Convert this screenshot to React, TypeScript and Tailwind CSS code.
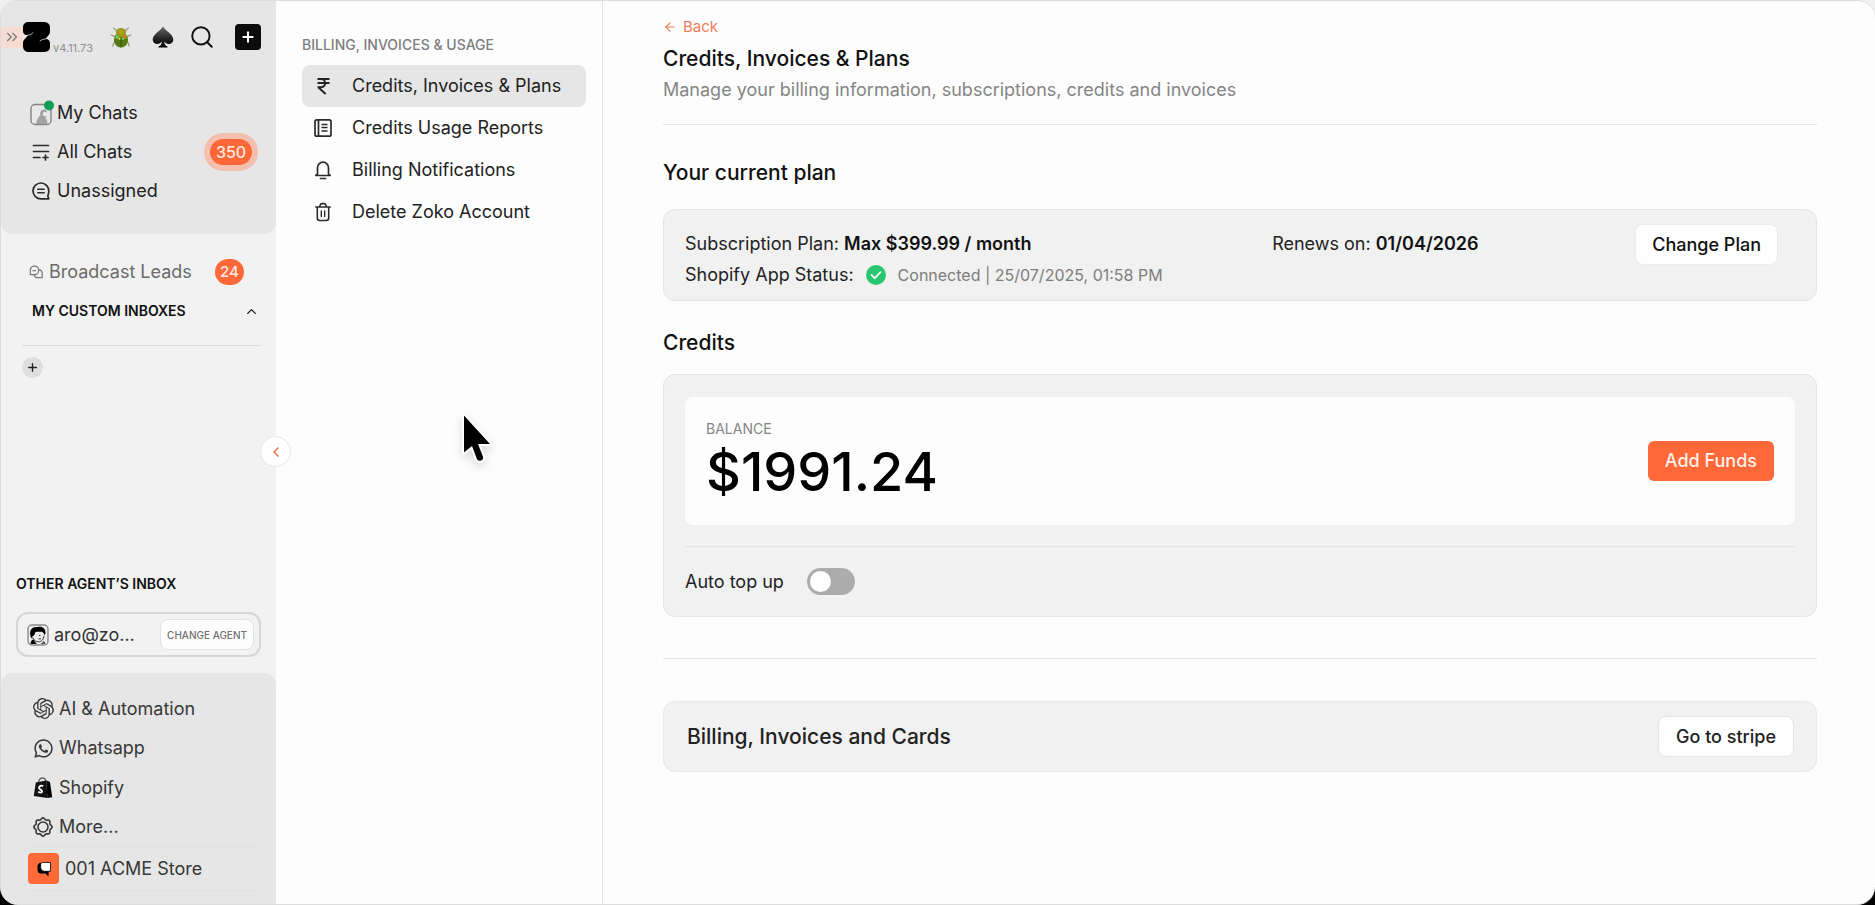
import type { ReactNode } from "react";
import { ArrowLeft, ChevronLeft, ChevronUp, ChevronsRight, Plus, Search } from "lucide-react";
import { SiOpenai } from "react-icons/si";
import { FaWhatsapp } from "react-icons/fa";

function ZokoLogo() {
  return (
    <svg viewBox="0 0 27 30" className="h-[30px] w-[27px]" aria-hidden="true">
      <path
        d="M5 0h16.500a5.500 5.500 0 0 1 5.500 5.500v4c0 2-.9 3.300-2.400 4.800L22.500 17h.3c2.600 0 4.200 1.700 4.200 4.200V25a5 5 0 0 1-5 5H5.500A5.500 5.500 0 0 1 0 24.500V21c0-2 .9-3.200 2.300-4.500L5 13.300C2 13.300 0 12 0 9.200V5a5 5 0 0 1 5-5z"
        fill="#000"
      />
      <path d="M4.500 13.300c2.200 0 4-.9 5.500-2.600M22.500 17c-2.200 0-4 .6-5.500 2" stroke="#d8d8d8" strokeWidth="0.800" strokeLinecap="round" fill="none" />
    </svg>
  );
}

function BeetleIcon() {
  return (
    <svg viewBox="0 0 22 22" className="h-[22px] w-[22px]" aria-hidden="true">
      <path
        d="M8 6.500C5 5.500 6.500 2.500 3 2M14 6.500c3-1 1.500-4 5-4.500M6 11c-2.500 0-2.500-2-5.500-2M16 11c2.500 0 2.500-2 5.500-2M6 14c-2.500.5-2 4.500-3.500 6.500M16 14c2.500.5 2 4.500 3.500 6.500"
        fill="none"
        stroke="#8d9276"
        strokeWidth="1.200"
      />
      <ellipse cx="11" cy="14" rx="7" ry="7.500" fill="#557a12" />
      <path d="M4.300 11.500a7 7.500 0 0 1 13.400 0c-3 3-10.400 3-13.400 0z" fill="#7f9a12" />
      <ellipse cx="11" cy="6.500" rx="5" ry="4.500" fill="#9a9b16" />
      <path d="M11 11v10.500" stroke="#37550b" strokeWidth="1" />
      <circle cx="11" cy="5.800" r="1.800" fill="#d09a14" />
      <circle cx="7" cy="11" r="1.200" fill="#4fe0d0" />
      <circle cx="15" cy="11" r="1.200" fill="#f06a3c" />
      <circle cx="9.500" cy="12.800" r="1" fill="#d8e84a" />
      <circle cx="13" cy="12.800" r="1" fill="#58dfa0" />
    </svg>
  );
}

function SpadeIcon() {
  return (
    <svg viewBox="0 0 22 22" className="h-[22px] w-[22px]" aria-hidden="true">
      <defs>
        <linearGradient id="spade" x1="0" y1="0" x2="0" y2="1">
          <stop offset="0" stopColor="#6a6a6a" />
          <stop offset="0.600" stopColor="#222" />
          <stop offset="1" stopColor="#000" />
        </linearGradient>
      </defs>
      <path
        d="M11 .5c2 4 10.300 7.500 10.300 13 0 2.800-2 4.500-4.500 4.500-2 0-3.600-1-4.600-2.500.2 2.500 1 4.300 3.300 5v1h-9v-1c2.300-.7 3.100-2.500 3.300-5-1 1.500-2.600 2.500-4.600 2.500C2.700 18 .7 16.300.7 13.500.7 8 9 4.500 11 .5z"
        fill="url(#spade)"
      />
    </svg>
  );
}

function ProfileIcon() {
  return (
    <svg viewBox="0 0 26 26" className="h-[26px] w-[26px]" aria-hidden="true">
      <rect x="3" y="4.500" width="20" height="20" rx="4" fill="#e9e9e9" stroke="#858585" strokeWidth="1.400" />
      <path d="M8 24c.8-4.500 2-7 4.500-8.500-1-3 .5-6 3.500-6 2.500 0 3.500 2 3 5-.3 1.800-1.200 2.500-1.500 3.500 1.500 1.500 2 3.500 2 6z" fill="#a3a3a3" />
      <circle cx="17" cy="14" r="2.200" fill="#ededed" />
      <circle cx="21" cy="5.500" r="5" fill="#0f9f55" />
    </svg>
  );
}

function AllChatsIcon() {
  return (
    <svg viewBox="0 0 18 18" className="h-[18px] w-[18px]" fill="none" stroke="#2b2b2b" strokeWidth="1.700" strokeLinecap="round" aria-hidden="true">
      <path d="M1.500 2.500h15M1.500 8.500h15M1.500 14.500h6.500M13.500 12v5M11 14.500h5" />
    </svg>
  );
}

function UnassignedIcon() {
  return (
    <svg viewBox="0 0 18 18" className="h-[18px] w-[18px]" fill="none" stroke="#2b2b2b" strokeWidth="1.700" strokeLinecap="round" strokeLinejoin="round" aria-hidden="true">
      <path d="M9 16.800A7.900 7.900 0 1 1 16.800 9c0 2.500-.5 3.800-1 5l1 2.800z" />
      <path d="M5.800 7.300h6.400M5.800 10.700h6.400" strokeWidth="1.500" />
    </svg>
  );
}

function BroadcastIcon() {
  return (
    <svg viewBox="0 0 16 16" className="h-[14px] w-[14px]" fill="none" stroke="#777" strokeWidth="1.400" strokeLinejoin="round" aria-hidden="true">
      <path d="M1.500 11V6A4.800 4.800 0 0 1 11 5v1.500A4.500 4.500 0 0 1 6.500 11z" />
      <path d="M11 5.500h.5A3.500 3.500 0 0 1 15 9v5.500H9.500A3.500 3.500 0 0 1 6 11M4 6.500h4" />
    </svg>
  );
}

function AgentIcon() {
  return (
    <svg viewBox="0 0 22 22" className="h-[22px] w-[22px] shrink-0" aria-hidden="true">
      <rect x="1" y="1" width="20" height="20" rx="4" fill="#ececec" stroke="#8b8b8b" strokeWidth="1.400" />
      <path d="M3.500 12C2 6 5 2.500 10.500 3c5-1 8 1.500 8 6l-1 2.500c-.5-2-1-3-2.500-3.800C11.500 8 9.500 7 8 8.500c0 2-1 3.500-2.500 3.500v2.500c-1 0-1.700-1-2-2.500z" fill="#000" />
      <path d="M6 14c1 2.500 3 3.800 5.500 3.800 3 0 5-2.500 5.500-6M12 11.500h1.500M11.500 14.800h2.500" fill="none" stroke="#222" strokeWidth="0.900" />
      <path d="M3.500 20c0-2.500 1-4 3-4.500 1 2 2 3 3.500 4.500z" fill="#000" />
      <path d="M13 20c1.500-.5 2.800-1.500 3.300-3 1.500.5 2 1.500 2 3z" fill="#555" />
    </svg>
  );
}

function ShopifyIcon() {
  return (
    <svg viewBox="0 0 20 22" className="h-[22px] w-[20px]" aria-hidden="true">
      <path d="M5.500 5.500C6 2.500 8 .8 10 1c1.800.2 2.800 1.800 3 4" fill="none" stroke="#666" strokeWidth="1.300" />
      <path d="M2.800 5.600 13.500 3.400l.8 17.600L.8 19z" fill="#111" />
      <path d="M13.500 3.400 17 5l2.200 15.200-4.900.9z" fill="#000" />
      <path d="M10.300 9c-2.200-1-4.300 0-4.200 1.800.1 1.900 3 1.800 2.900 3.600-.1 1.500-2 1.600-3.800.4" fill="none" stroke="#fff" strokeWidth="1.900" />
    </svg>
  );
}

function GearIcon() {
  const steps = 96;
  const points = Array.from({ length: steps }, (_, i) => {
    const angle = (i / steps) * Math.PI * 2;
    const radius = 8.3 + 0.8 * Math.cos(angle * 8);
    return `${(10 + radius * Math.cos(angle)).toFixed(2)},${(10 + radius * Math.sin(angle)).toFixed(2)}`;
  }).join(" ");
  return (
    <svg viewBox="0 0 20 20" className="h-[20px] w-[20px]" fill="none" stroke="#3a3a3a" strokeWidth="1.600" strokeLinejoin="round" aria-hidden="true">
      <polygon points={points} />
      <circle cx="10" cy="10" r="5" />
    </svg>
  );
}

function StoreIcon() {
  return (
    <span className="flex size-[31px] items-center justify-center rounded bg-[#ff6a38]">
      <svg viewBox="0 0 16 16" className="size-[16px]" aria-hidden="true">
        <path d="M4 1.500 2 3.500C1.300 4.500 1.500 6 1.500 8c0 3 .8 4.500 3.500 4.500h4.500l3 3v-4l2-2z" fill="#000" />
        <path d="M6.500 1.500h8v8.800h-6a3.800 3.800 0 0 1-3.800-3.800v-3a2 2 0 0 1 1.800-2z" fill="#fff" stroke="#000" strokeWidth="0.800" />
      </svg>
    </span>
  );
}

function RupeeIcon() {
  return (
    <svg viewBox="0 0 20 20" className="size-[20px]" fill="none" stroke="#222" strokeWidth="1.900" aria-hidden="true">
      <path d="M4.500 3h12M4.500 7h12M4.500 3H8c5.500 0 5.500 8.200 0 8.200H5.500v.3l7.200 6.500" />
    </svg>
  );
}

function ReportIcon() {
  return (
    <svg viewBox="0 0 20 20" className="size-[20px]" fill="none" stroke="#2b2b2b" strokeWidth="1.700" strokeLinejoin="round" aria-hidden="true">
      <rect x="2" y="1.800" width="16" height="16.400" rx="1.800" />
      <path d="M5.500 2v16" />
      <path d="M8.500 6.500h6M8.500 9.500h6M8.500 13h6" strokeWidth="1.500" />
    </svg>
  );
}

function BellIcon() {
  return (
    <svg viewBox="0 0 20 20" className="size-[20px]" fill="none" stroke="#2b2b2b" strokeWidth="1.700" strokeLinecap="round" strokeLinejoin="round" aria-hidden="true">
      <path d="M4.500 14V7.700a5.500 5.500 0 0 1 11 0V14l1.700 1.500H2.800zM7.500 18.500h5" />
    </svg>
  );
}

function TrashIcon() {
  return (
    <svg viewBox="0 0 20 20" className="size-[20px]" fill="none" stroke="#2b2b2b" strokeWidth="1.600" strokeLinecap="round" strokeLinejoin="round" aria-hidden="true">
      <path d="M2.800 5h14.400M4.300 5v11a2.500 2.500 0 0 0 2.500 2.500h6.400a2.500 2.500 0 0 0 2.500-2.500V5M6.500 5l.8-2.300A1.500 1.500 0 0 1 8.700 1.600h2.600a1.500 1.500 0 0 1 1.400 1.100l.8 2.300" />
      <path d="M8.300 9v5.500M11.700 9v5.500" strokeWidth="1.400" />
    </svg>
  );
}

function CursorArrow() {
  return (
    <svg viewBox="0 0 40 58" className="pointer-events-none absolute top-[408px] left-[456px] z-20 h-[58px] w-[40px] drop-shadow-lg" aria-hidden="true">
      <path
        d="M7 6.500v37l8-6.500 5 13.200a3.300 3.300 0 0 0 6-2.500L21 35h12z"
        fill="#000"
        stroke="#fff"
        strokeWidth="4"
        strokeLinejoin="round"
        paintOrder="stroke"
      />
    </svg>
  );
}

function NavRow({ icon, label, badge }: { icon: ReactNode; label: string; badge?: ReactNode }) {
  return (
    <a href="#" className="flex h-[39px] items-center gap-[3px]">
      <span className="flex w-[26px] justify-center">{icon}</span>
      <span className="flex-1">{label}</span>
      {badge}
    </a>
  );
}

function Sidebar() {
  return (
    <aside className="relative flex w-[275px] shrink-0 flex-col bg-[#f2f2f2] text-[18px] leading-6">
      <div className="flex h-[233px] flex-col rounded-b-xl bg-[#e6e6e6]">
        <header className="mt-[21px] flex h-[30px] items-center">
          <button aria-label="Expand" className="flex h-[21px] w-[22px] items-center justify-center bg-[#f6dbd2] text-[#777]">
            <ChevronsRight size={18} strokeWidth={1.5} />
          </button>
          <ZokoLogo />
          <span className="ml-[3px] self-end text-[11px] leading-[8px] text-[#8f8f8f]">v4.11.73</span>
          <button aria-label="Debug" className="ml-[17px]"><BeetleIcon /></button>
          <button aria-label="Spaces" className="ml-5"><SpadeIcon /></button>
          <button aria-label="Search" className="ml-[15px] text-[#111]"><Search size={26} strokeWidth={1.8} /></button>
          <button aria-label="New chat" className="ml-5 flex size-[26px] items-center justify-center rounded bg-[#0c0c0c] text-white">
            <Plus size={16} strokeWidth={3} />
          </button>
        </header>
        <nav aria-label="Chats" className="mt-[41px] pr-6 pl-[27px] text-[#222]">
          <NavRow icon={<ProfileIcon />} label="My Chats" />
          <NavRow
            icon={<AllChatsIcon />}
            label="All Chats"
            badge={<span className="flex h-[26px] w-[42px] items-center justify-center rounded-full bg-[#ff6838] text-[16px] font-medium text-[#ffe9e0] ring-6 ring-[#f3bfae]">350</span>}
          />
          <NavRow icon={<UnassignedIcon />} label="Unassigned" />
        </nav>
      </div>

      <a href="#" className="mt-[18px] flex h-[39px] items-center pr-8 pl-[28px] text-[#6b6b6b]">
        <BroadcastIcon />
        <span className="ml-[6px] flex-1">Broadcast Leads</span>
        <span className="flex h-[26px] w-[29px] items-center justify-center rounded-full bg-[#ff6838] text-[15px] font-medium text-[#ffe9e0]">24</span>
      </a>
      <button className="flex h-[40px] items-center justify-between pr-[17px] pl-[31px] text-[14px] font-semibold text-[#111]">
        MY CUSTOM INBOXES
        <ChevronUp size={15} strokeWidth={2} />
      </button>
      <div className="mt-[14px] mr-[15px] ml-[21px] border-t border-[#dcdcdc] pt-[11px]">
        <button aria-label="Add inbox" className="flex size-[21px] items-center justify-center rounded-full bg-[#dedede] text-[#222]">
          <Plus size={13} strokeWidth={2.5} />
        </button>
      </div>

      <div className="mt-auto px-[15px]">
        <h2 className="text-[14px] leading-5 font-semibold text-[#111]">OTHER AGENT’S INBOX</h2>
        <div className="mt-[18px] flex h-[45px] items-center rounded-xl border-2 border-[#d6d6d6] pr-[5px] pl-[9px]">
          <AgentIcon />
          <span className="ml-[5px] text-[#333]">aro@zo...</span>
          <button className="ml-auto h-[31px] rounded-lg border border-[#e2e2e2] bg-[#fdfdfd] px-[6px] text-[10px] font-medium whitespace-nowrap text-[#707070]">CHANGE AGENT</button>
        </div>
      </div>

      <div className="mt-4 rounded-t-xl bg-[#e6e6e6] pt-4 pr-[21px] pb-[13px] pl-[27px] text-[#383838]">
        <nav aria-label="Settings">
          <a href="#" className="flex h-[39px] items-center gap-[5px] pl-[5px]"><SiOpenai size={21} /><span>AI &amp; Automation</span></a>
          <a href="#" className="flex h-[40px] items-center gap-[5px] pl-[5px]"><FaWhatsapp size={21} /><span>Whatsapp</span></a>
          <a href="#" className="flex h-[39px] items-center gap-[6px] pl-[5px]"><ShopifyIcon /><span>Shopify</span></a>
          <a href="#" className="flex h-[39px] items-center gap-[6px] pl-[5px]"><GearIcon /><span>More...</span></a>
        </nav>
        <a href="#" className="flex h-[45px] items-center gap-[6px] border-y border-[#e0e0e0]">
          <StoreIcon />
          <span>001 ACME Store</span>
        </a>
      </div>

      <button aria-label="Collapse sidebar" className="absolute top-[435px] -right-[15px] z-10 flex size-[31px] items-center justify-center rounded-full border border-[#e6e6e6] bg-white text-[#e8744e]">
        <ChevronLeft size={16} strokeWidth={2.4} />
      </button>
    </aside>
  );
}

const billingLinks = [
  { label: "Credits, Invoices & Plans", icon: <RupeeIcon />, active: true },
  { label: "Credits Usage Reports", icon: <ReportIcon />, active: false },
  { label: "Billing Notifications", icon: <BellIcon />, active: false },
  { label: "Delete Zoko Account", icon: <TrashIcon />, active: false },
];

function BillingNav() {
  return (
    <nav aria-label="Billing" className="w-[327px] shrink-0 border-r border-[#e4e4e4] pt-[34px] pr-4 pl-[26px]">
      <h2 className="text-[14px] leading-5 font-medium text-[#7d7d7d]">BILLING, INVOICES &amp; USAGE</h2>
      <ul className="mt-[10px] text-[18px] leading-6 text-[#222]">
        {billingLinks.map((link) => (
          <li key={link.label}>
            <a href="#" className={link.active ? "flex h-[42px] items-center gap-[19px] rounded-lg bg-[#e6e6e6] pl-[11px]" : "flex h-[42px] items-center gap-[19px] rounded-lg pl-[11px]"}>
              {link.icon}
              <span>{link.label}</span>
            </a>
          </li>
        ))}
      </ul>
    </nav>
  );
}

function Billing() {
  return (
    <main className="min-w-0 flex-1 pt-4 pr-[58px] pl-[60px] text-[18px] leading-6 text-[#222]">
      <a href="#" className="flex h-[20px] items-center gap-[6px] text-[15px] text-[#ee7d5a]">
        <ArrowLeft size={14} strokeWidth={2} />
        Back
      </a>
      <h1 className="mt-2 text-[21px] leading-7 font-medium text-[#111]">Credits, Invoices &amp; Plans</h1>
      <p className="mt-[5px] text-[#858585]">Manage your billing information, subscriptions, credits and invoices</p>

      <section className="mt-[22px] border-t border-[#e4e4e4] pt-[34px]">
        <h2 className="text-[21px] leading-7 font-medium text-[#111]">Your current plan</h2>
        <div className="mt-[22px] flex h-[92px] rounded-xl border border-[#e5e5e5] bg-[#f1f1f1] pt-[14px] pr-[38px] pl-[21px]">
          <div className="flex-[587] pt-2">
            <p>Subscription Plan: <strong className="font-semibold text-[#111]">Max $399.99 / month</strong></p>
            <p className="mt-[7px] flex items-center">
              Shopify App Status:
              <svg viewBox="0 0 20 20" className="ml-[12px] size-[20px]" role="img" aria-label="Connected">
                <circle cx="10" cy="10" r="10" fill="#28c76f" />
                <path d="m5.500 10 3.200 3.200 5.800-6" fill="none" stroke="#fff" strokeWidth="1.800" strokeLinecap="round" strokeLinejoin="round" />
              </svg>
              <span className="ml-[12px] text-[16px] text-[#7d7d7d]">Connected | 25/07/2025, 01:58 PM</span>
            </p>
          </div>
          <p className="flex-[363] pt-2">Renews on: <strong className="font-semibold text-[#111]">01/04/2026</strong></p>
          <button className="h-[41px] shrink-0 rounded-lg border border-[#ececec] bg-[#fefefe] px-4 font-medium text-[#111]">Change Plan</button>
        </div>
      </section>

      <section className="mt-7">
        <h2 className="text-[21px] leading-7 font-medium text-[#111]">Credits</h2>
        <div className="mt-[17px] rounded-xl border border-[#e5e5e5] bg-[#f1f1f1] px-[21px] pt-[22px] pb-[21px]">
          <div className="flex h-[128px] items-center justify-between rounded-lg bg-[#fdfdfd] pr-[21px] pl-[21px]">
            <div className="pb-[2px]">
              <p className="text-[14px] leading-5 text-[#858585]">BALANCE</p>
              <p className="mt-[3px] text-[54px] leading-[60px] font-medium text-black">$1991.24</p>
            </div>
            <button className="h-[40px] rounded-md bg-[#ff6838] px-[17px] font-medium text-[#fff0ea]">Add Funds</button>
          </div>
          <div className="mt-[21px] flex border-t border-[#e4e4e4] pt-[21px]">
            <label className="flex h-[27px] cursor-pointer items-center gap-[23px]">
              Auto top up
              <input type="checkbox" className="peer sr-only" />
              <span className="flex h-[27px] w-[48px] items-center rounded-full bg-[#acacac] p-[3px] peer-checked:justify-end peer-checked:bg-[#ff6838]">
                <span className="size-[21px] rounded-full bg-white" />
              </span>
            </label>
          </div>
        </div>
      </section>

      <section className="mt-[41px] border-t border-[#e4e4e4] pt-[42px]">
        <div className="flex h-[71px] items-center justify-between rounded-xl border border-[#e8e8e8] bg-[#f1f1f1] pr-[22px] pl-[23px]">
          <h2 className="text-[21px] leading-7 font-medium">Billing, Invoices and Cards</h2>
          <button className="h-[41px] rounded-lg border border-[#e4e4e4] bg-[#fefefe] px-[17px] font-medium">Go to stripe</button>
        </div>
      </section>
    </main>
  );
}

export default function App() {
  return (
    <div className="flex min-h-screen bg-linear-to-b from-[#f0f0f0] from-50% to-black to-50% font-['Inter',sans-serif]">
      <div className="relative flex flex-1 overflow-hidden rounded-[18px] border border-r-0 border-[#dcdcdc] bg-[#fdfdfd]">
        <Sidebar />
        <BillingNav />
        <Billing />
        <CursorArrow />
      </div>
    </div>
  );
}
